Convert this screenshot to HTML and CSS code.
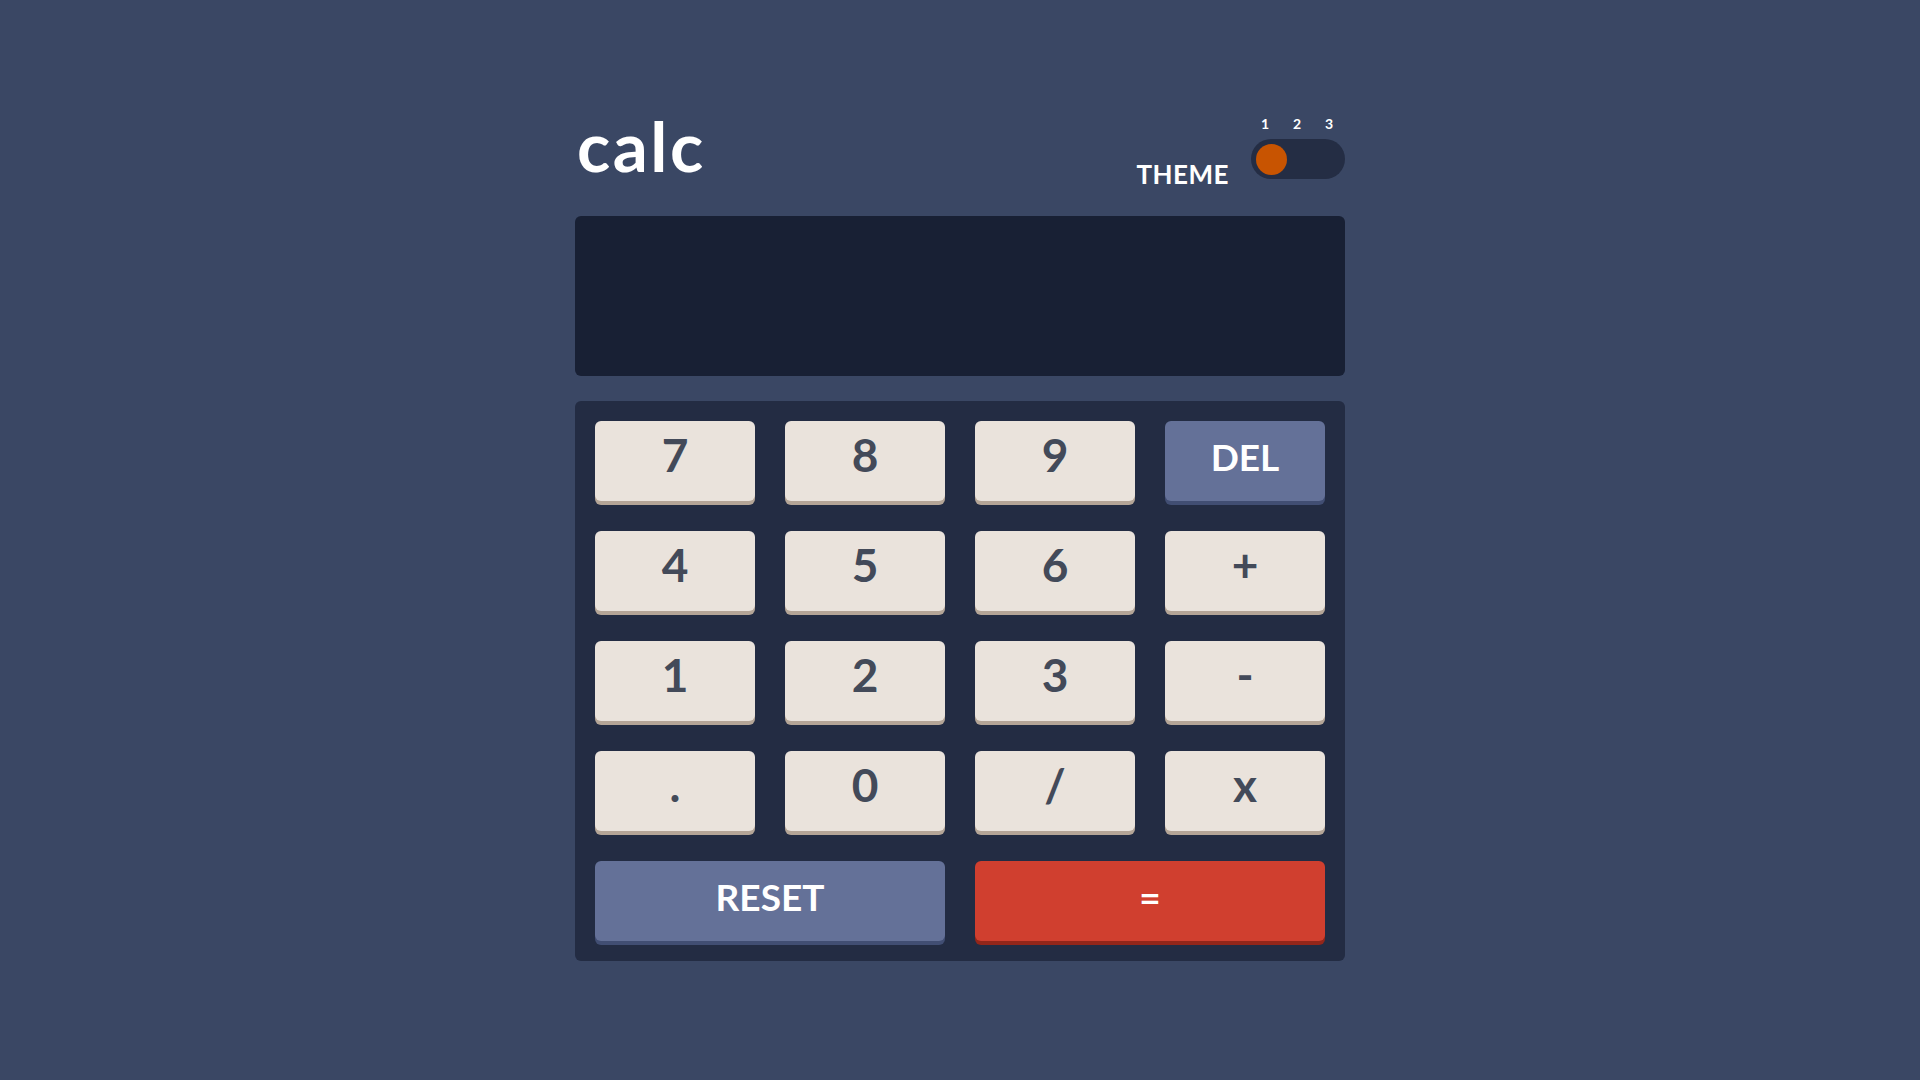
FILE: index.html
```html
<!DOCTYPE html>
<html lang="en">
<head>
<meta charset="utf-8">
<title>calc</title>
<link rel="stylesheet" href="styles.css">
</head>
<body>
<main class="app">
  <header class="header">
    <h1 class="logo">calc</h1>
    <div class="theme">
      <span class="theme-label">THEME</span>
      <div class="switch-group">
        <div class="switch-nums"><span>1</span><span>2</span><span>3</span></div>
        <div class="switch"><span class="knob"></span></div>
      </div>
    </div>
  </header>
  <section class="screen"></section>
  <section class="keypad">
    <button class="key">7</button>
    <button class="key">8</button>
    <button class="key">9</button>
    <button class="key key-blue">DEL</button>
    <button class="key">4</button>
    <button class="key">5</button>
    <button class="key">6</button>
    <button class="key">+</button>
    <button class="key">1</button>
    <button class="key">2</button>
    <button class="key">3</button>
    <button class="key">-</button>
    <button class="key">.</button>
    <button class="key">0</button>
    <button class="key">/</button>
    <button class="key">x</button>
    <button class="key key-blue key-wide">RESET</button>
    <button class="key key-red key-wide">=</button>
  </section>
</main>
</body>
</html>
```
FILE: styles.css
```css
* { box-sizing: border-box; }
html, body { margin: 0; padding: 0; }
body {
  background: #3a4764;
  font-family: Lato, "Open Sans", sans-serif;
  font-weight: 700;
  color: #ffffff;
  min-height: 100vh;
}
.app {
  width: 770px;
  margin: 0 auto;
  padding-top: 117px;
}
.header {
  display: flex;
  justify-content: space-between;
  align-items: flex-end;
  height: 70px;
  margin-bottom: 29px;
}
.logo {
  margin: 0 0 7px 2px;
  font-size: 69px;
  line-height: 1;
  font-weight: 700;
  letter-spacing: 2.5px;
}
.theme {
  display: flex;
  align-items: flex-end;
  gap: 22px;
}
.theme-label {
  font-size: 26px;
  line-height: 1;
  margin-bottom: 0;
  letter-spacing: 0.5px;
}
.switch-group {
  display: flex;
  flex-direction: column;
  gap: 8px;
  margin-bottom: 8px;
}
.switch-nums {
  display: flex;
  justify-content: space-between;
  padding: 0 6px 0 4px;
  font-size: 14px;
  line-height: 1;
}
.switch-nums span {
  width: 20px;
  text-align: center;
}
.switch {
  width: 94px;
  height: 40px;
  border-radius: 20px;
  background: #242d44;
  padding: 5px;
  display: flex;
  align-items: center;
}
.knob {
  width: 31px;
  height: 31px;
  border-radius: 50%;
  background: #c85401;
}
.screen {
  height: 160px;
  background: #182034;
  border-radius: 6px;
  margin-bottom: 25px;
}
.keypad {
  background: #232c43;
  border-radius: 6px;
  padding: 20px;
  display: grid;
  grid-template-columns: repeat(4, 160px);
  grid-auto-rows: 80px;
  gap: 30px;
}
.key {
  border: 0;
  border-radius: 6px;
  background: #eae3dc;
  box-shadow: 0 4px 0 #b4a597;
  color: #434a59;
  font-family: Lato, "Open Sans", sans-serif;
  font-weight: 700;
  font-size: 46px;
  line-height: 1;
  padding: 0 0 12px;
  display: flex;
  align-items: center;
  justify-content: center;
}
.key-blue {
  background: #647198;
  box-shadow: 0 4px 0 #414e73;
  color: #ffffff;
  font-size: 37px;
  padding-bottom: 9px;
}
.key-red {
  background: #d03f2f;
  box-shadow: 0 4px 0 #93261a;
  color: #ffffff;
  font-size: 37px;
  padding-bottom: 9px;
}
.key-wide {
  grid-column: span 2;
}
```
